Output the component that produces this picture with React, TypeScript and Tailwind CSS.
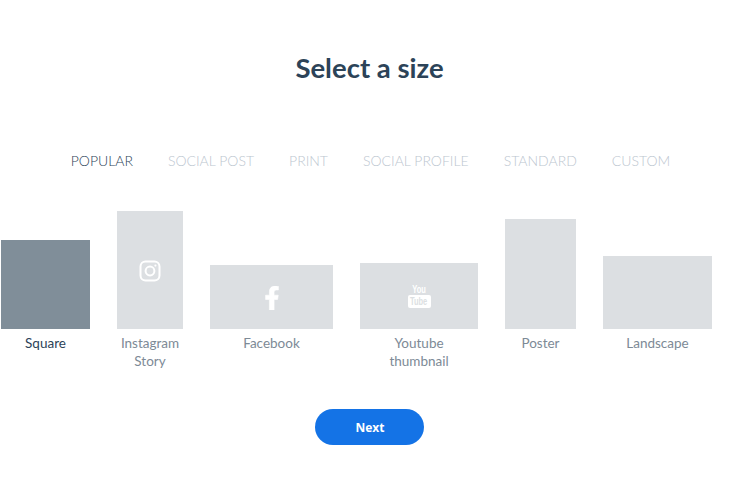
import { FaFacebookF } from "react-icons/fa";

const tabs = ["POPULAR", "SOCIAL POST", "PRINT", "SOCIAL PROFILE", "STANDARD", "CUSTOM"];

function InstagramGlyph() {
  return (
    <svg width="22" height="22" viewBox="0 0 22 22" fill="none" stroke="white" strokeWidth="2">
      <rect x="1.5" y="1.5" width="19" height="19" rx="5" />
      <circle cx="11" cy="11" r="4.4" />
      <circle cx="16.4" cy="5.6" r="1.1" fill="white" stroke="none" />
    </svg>
  );
}

function YoutubeGlyph() {
  return (
    <div className="flex flex-col items-center font-['Liberation_Sans',sans-serif] font-bold">
      <span className="text-[10px] leading-[11px] text-white scale-x-75">You</span>
      <span className="rounded-[2px] bg-white px-[1px] h-[13px] w-[23px] flex items-center justify-center text-[10px] leading-[11px] text-[#dcdfe2]">
        <span className="scale-x-75">Tube</span>
      </span>
    </div>
  );
}

const sizes = [
  { label: "Square", width: "w-[89px]", box: "h-[89px] bg-[#808e99]", active: true },
  { label: "Instagram Story", width: "w-[66px]", box: "h-[118px] bg-[#dcdfe2] pt-[2px]", icon: <InstagramGlyph /> },
  { label: "Facebook", width: "w-[123px]", box: "h-[64px] bg-[#dcdfe2] pt-[1px]", icon: <FaFacebookF className="h-[24px] w-[24px] text-white stroke-white stroke-[12]" /> },
  { label: "Youtube thumbnail", width: "w-[118px]", box: "h-[66px] bg-[#dcdfe2]", icon: <YoutubeGlyph />, labelW: "w-[80px]" },
  { label: "Poster", width: "w-[71px]", box: "h-[110px] bg-[#dcdfe2]" },
  { label: "Landscape", width: "w-[109px]", box: "h-[73px] bg-[#dcdfe2]" },
];

export default function App() {
  return (
    <div className="h-[486px] w-[741px] overflow-hidden bg-white font-['Lato',sans-serif]">
      <h1 className="pt-[49px] text-center text-[27.5px] leading-[38px] font-bold text-[#2c4358] pr-[2px]">
        Select a size
      </h1>

      <div className="mt-[62px] flex h-[22px] items-center justify-center gap-[35px] text-[14px] font-light">
        {tabs.map((tab, i) => (
          <span key={tab} className={i === 0 ? "text-[#2c4358]" : "text-[#bcc6cf]"}>
            {tab}
          </span>
        ))}
      </div>

      <div className="mt-[39px] flex gap-[27px] pl-[1px]">
        {sizes.map((s) => (
          <div key={s.label} className={`flex flex-col items-center ${s.width}`}>
            <div className="flex h-[119px] w-full items-end">
              <div className={`flex w-full items-center justify-center ${s.box}`}>
                {s.icon}
              </div>
            </div>
            <p
              className={`mt-[5px] text-center text-[13.5px] leading-[18px] ${s.labelW ?? ""} ${
                s.active ? "text-[#2c4358]" : "text-[#7d8a96]"
              }`}
            >
              {s.label}
            </p>
          </div>
        ))}
      </div>

      <div className="mt-[39px] flex justify-center pr-[3px]">
        <button className="h-[36px] w-[109px] rounded-full bg-[#1473e6] pt-[2px] pl-[2px] font-['Open_Sans',sans-serif] text-[12px] font-bold text-white">
          Next
        </button>
      </div>
    </div>
  );
}
